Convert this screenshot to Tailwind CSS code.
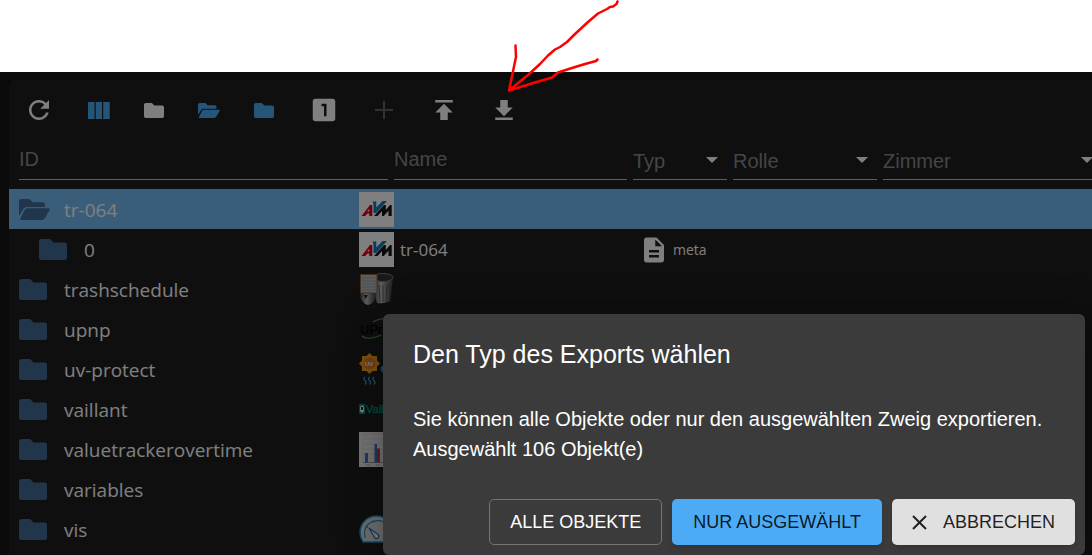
<!DOCTYPE html>
<html lang="de">
<head>
  <meta charset="UTF-8">
  <meta name="viewport" content="width=device-width, initial-scale=1.0">
  <title>Objekte</title>
  <script src="https://cdn.jsdelivr.net/npm/@tailwindcss/browser@4"></script>
</head>
<body class="h-screen flex flex-col overflow-hidden bg-white relative font-['Liberation_Sans',Arial,sans-serif]">
  <!-- Shared icons -->
  <svg class="hidden" aria-hidden="true">
    <symbol id="folder" viewBox="0 0 28 21"><path d="M2.500 0H11L14.500 3.500H25.500Q28 3.500 28 6V18.500Q28 21 25.500 21H2.500Q0 21 0 18.500V2.500Q0 0 2.500 0Z"/></symbol>
    <symbol id="folder-open" viewBox="0 0 31 21"><path d="M0 17V2.500Q0 0 2.500 0H10.500L13.500 3.200H23.500Q26 3.200 26 5.700V8H8Q5.500 8 4.200 10L0 17Z"/><path d="M8 9.300H29.700Q31.500 9.300 30.600 10.900L26 19Q24.900 21 22.700 21H2.200Q.6 21 1.400 19.500L5.700 11Q6.600 9.300 8 9.300Z"/></symbol>
    <symbol id="avm" viewBox="0 0 35 35">
      <path fill="#fff" d="M0 0H35V35H0Z"/>
      <path fill="#e2001a" d="M2.500 24L11 13H13.300V24H10.200V21.500H8.500L6.300 24ZM10.200 16.800L8.200 19.500H10.200Z"/>
      <path fill="#0a7fc4" d="M13.800 9.500H17.300V15.500L23.500 9H28L17 21H14.500V13Z"/>
      <path fill="#151515" d="M15 24L25 13H26.800V18L31 13H32.700V24H29.500V18.800L24.800 24H23V19L18.500 24Z"/>
    </symbol>
    <symbol id="caret" viewBox="0 0 12 6"><path d="M0 0H12L6 6Z"/></symbol>
  </svg>

  <div class="h-[72px] shrink-0"></div>

  <div class="relative flex-1 min-h-0 bg-[#141414] pl-[9px] pt-2 overflow-hidden">
    <main class="h-full bg-[#1f1f1f] rounded-tl-md overflow-hidden text-white">
      <!-- Toolbar -->
      <div class="flex items-center h-[60px]">
        <button aria-label="Aktualisieren" class="w-[60px] h-[60px] grid place-items-center">
          <svg class="size-[30px] fill-white" viewBox="0 0 24 24"><path d="M17.650 6.350C16.200 4.900 14.210 4 12 4c-4.420 0-7.990 3.580-7.990 8s3.570 8 7.990 8c3.730 0 6.840-2.550 7.730-6h-2.080c-.820 2.330-3.040 4-5.650 4-3.310 0-6-2.690-6-6s2.690-6 6-6c1.660 0 3.140.690 4.220 1.780L13 11h7V4l-2.350 2.350z"/></svg>
        </button>
        <div class="flex ml-[2px] mr-[3px]">
          <button aria-label="Spalten" class="w-[55px] h-[60px] grid place-items-center">
            <svg class="w-[22px] h-[17px] fill-[#4dabf5]" viewBox="0 0 22 17"><path d="M0 0H6.500V17H0ZM7.700 0H14V17H7.700ZM15.200 0H21.700V17H15.200Z"/></svg>
          </button>
          <button aria-label="Alle schließen" class="w-[55px] h-[60px] grid place-items-center">
            <svg class="w-5 h-[15px] fill-white"><use href="#folder"/></svg>
          </button>
          <button aria-label="Alle öffnen" class="w-[55px] h-[60px] grid place-items-center">
            <svg class="w-[22px] h-[15px] fill-[#4dabf5]"><use href="#folder-open"/></svg>
          </button>
          <button aria-label="Eine Ebene schließen" class="w-[55px] h-[60px] grid place-items-center">
            <svg class="w-5 h-[15px] fill-[#4dabf5]"><use href="#folder"/></svg>
          </button>
        </div>
        <button aria-label="Statusobjekte" class="w-[60px] h-[60px] grid place-items-center">
          <svg class="size-[30px] fill-white" viewBox="0 0 24 24"><path d="M19 3H5c-1.100 0-2 .9-2 2v14c0 1.100.9 2 2 2h14c1.100 0 2-.9 2-2V5c0-1.100-.9-2-2-2zM14 17h-2V9h-2V7h4z"/></svg>
        </button>
        <button aria-label="Hinzufügen" disabled class="w-[60px] h-[60px] grid place-items-center">
          <svg class="size-[30px] fill-[#626262]" viewBox="0 0 24 24"><path d="M19.200 12.800h-6.400v6.400h-1.600v-6.400H4.800v-1.600h6.400V4.800h1.600v6.400h6.400z"/></svg>
        </button>
        <button aria-label="Importieren" class="w-[60px] h-[60px] grid place-items-center">
          <svg class="size-[30px] fill-white" viewBox="0 0 24 24"><path d="M5 4v2h14V4H5zm0 10h4v6h6v-6h4l-7-7-7 7z"/></svg>
        </button>
        <button aria-label="Exportieren" class="w-[60px] h-[60px] grid place-items-center">
          <svg class="size-[30px] fill-white" viewBox="0 0 24 24"><path d="M19 10h-4V4H9v6H5l7 7 7-7zM5 18v2h14v-2H5z"/></svg>
        </button>
      </div>

      <!-- Object tree -->
      <table class="w-full min-w-[1099px] table-fixed text-left font-['Open_Sans','Segoe_UI',sans-serif] text-[19px]">
        <colgroup>
          <col class="w-[385px]"><col class="w-[239px]"><col class="w-[100px]"><col class="w-[150px]"><col>
        </colgroup>
        <thead class="font-['Liberation_Sans',Arial,sans-serif] text-xl">
          <tr>
            <th class="font-normal p-0 pb-[9px] pl-[10px] pr-[6px]"><input aria-label="ID" placeholder="ID" class="block w-full h-10 border-b border-[#bebebe] placeholder:text-[#8a8a8a] outline-none"></th>
            <th class="font-normal p-0 pb-[9px] pr-[6px]"><input aria-label="Name" placeholder="Name" class="block w-full h-10 border-b border-[#bebebe] placeholder:text-[#8a8a8a] outline-none"></th>
            <th class="font-normal p-0 pb-[9px] pr-[6px]">
              <div class="relative">
                <select aria-label="Typ" class="block appearance-none w-full h-10 pt-0.5 border-b border-[#bebebe] text-[#8a8a8a] outline-none"><option>Typ</option></select>
                <svg class="absolute right-[9px] top-[17px] w-3 h-[6px] fill-white pointer-events-none"><use href="#caret"/></svg>
              </div>
            </th>
            <th class="font-normal p-0 pb-[9px] pr-[6px]">
              <div class="relative">
                <select aria-label="Rolle" class="block appearance-none w-full h-10 pt-0.5 border-b border-[#bebebe] text-[#8a8a8a] outline-none"><option>Rolle</option></select>
                <svg class="absolute right-[9px] top-[17px] w-3 h-[6px] fill-white pointer-events-none"><use href="#caret"/></svg>
              </div>
            </th>
            <th class="font-normal p-0 pb-[9px] pr-[6px]">
              <div class="relative">
                <select aria-label="Zimmer" class="block appearance-none w-full h-10 pt-0.5 border-b border-[#bebebe] text-[#8a8a8a] outline-none"><option>Zimmer</option></select>
                <svg class="absolute right-[9px] top-[17px] w-3 h-[6px] fill-white pointer-events-none"><use href="#caret"/></svg>
              </div>
            </th>
          </tr>
        </thead>
        <tbody>
          <tr class="h-10 bg-[#74bcf4]">
            <td class="p-0 pl-[10px]">
              <div class="flex items-center">
                <svg class="w-[31px] h-[21px] mr-[14px] fill-[#446c96]"><use href="#folder-open"/></svg>
                <span class="flex-1 pt-0.5">tr-064</span>
                <svg class="size-[35px]"><use href="#avm"/></svg>
              </div>
            </td>
            <td></td><td></td><td></td><td></td>
          </tr>
          <tr class="h-10">
            <td class="p-0 pl-[30px]">
              <div class="flex items-center">
                <svg class="w-7 h-[21px] mr-[17px] fill-[#446c96]"><use href="#folder"/></svg>
                <span class="flex-1 pt-0.5">0</span>
                <svg class="size-[35px]"><use href="#avm"/></svg>
              </div>
            </td>
            <td class="p-0 pt-0.5 pl-[6px] text-[17px]">tr-064</td>
            <td class="p-0 pt-0.5 pl-[6px]">
              <div class="flex items-center gap-1 text-sm">
                <svg class="size-[30px] fill-white" viewBox="0 0 24 24"><path d="M14 2H6c-1.100 0-2 .9-2 2v16c0 1.100.9 2 2 2h12c1.100 0 2-.9 2-2V8l-6-6zm2 16H8v-2h8v2zm0-4H8v-2h8v2zm-3-5V3.500L18.500 9H13z"/></svg>
                <span>meta</span>
              </div>
            </td>
            <td></td><td></td>
          </tr>
          <tr class="h-10">
            <td class="p-0 pl-[10px]">
              <div class="flex items-center">
                <svg class="w-7 h-[21px] mr-[17px] fill-[#446c96]"><use href="#folder"/></svg>
                <span class="flex-1 pt-0.5">trashschedule</span>
                <svg class="size-[35px]" viewBox="0 0 35 35">
                  <defs><linearGradient id="can"><stop offset="0" stop-color="#444"/><stop offset=".4" stop-color="#bbb"/><stop offset=".7" stop-color="#777"/><stop offset="1" stop-color="#444"/></linearGradient></defs>
                  <path fill="url(#can)" d="M14 5L34 5L31 29Q25 32 18 31L15 20Z"/>
                  <path stroke="#444" stroke-width=".8" d="M20 13L21 30M24 13V30M28 13L27 30M31 12L30 28"/>
                  <ellipse cx="24" cy="5.500" rx="10" ry="4" fill="#333" stroke="#777"/>
                  <path fill="url(#can)" d="M1 21H17Q17 31 9 33Q1 31 1 21Z"/>
                  <path fill="#222" d="M5 23H9L6.500 27Z"/>
                  <path fill="#b4b8bc" stroke="#8c6239" d="M1.500 2.500H18V21H1.500Z"/>
                  <path stroke="#8a929c" stroke-width=".8" stroke-dasharray="1.500 1" d="M3 6H17M3 9H17M3 12H17M3 15H17M3 18H17"/>
                </svg>
              </div>
            </td>
            <td></td><td></td><td></td><td></td>
          </tr>
          <tr class="h-10">
            <td class="p-0 pl-[10px]">
              <div class="flex items-center">
                <svg class="w-7 h-[21px] mr-[17px] fill-[#446c96]"><use href="#folder"/></svg>
                <span class="flex-1 pt-0.5">upnp</span>
                <svg class="size-[35px]" viewBox="0 0 35 35">
                  <path fill="none" stroke="#4a9a4a" stroke-width="1.200" d="M14 10Q20 6 33 6M3 24Q8 29 22 23"/>
                  <text x="1" y="22" font-size="13" fill="#000" font-family="Liberation Sans, sans-serif">UPnP</text>
                </svg>
              </div>
            </td>
            <td></td><td></td><td></td><td></td>
          </tr>
          <tr class="h-10">
            <td class="p-0 pl-[10px]">
              <div class="flex items-center">
                <svg class="w-7 h-[21px] mr-[17px] fill-[#446c96]"><use href="#folder"/></svg>
                <span class="flex-1 pt-0.5">uv-protect</span>
                <svg class="size-[35px]" viewBox="0 0 35 35">
                  <path fill="#f0a818" d="M10.500 1L13.500 4L18 4L18 8.500L21 11.500L18 14.500V19H13.500L10.500 22L7.500 19H3V14.500L0 11.500L3 8.500V4H7.500Z"/>
                  <circle cx="10.500" cy="11.500" r="6" fill="#f07830"/>
                  <text x="6" y="14" font-size="6" font-weight="bold" fill="#fff" font-family="Liberation Sans, sans-serif">UV</text>
                  <path fill="none" stroke="#3fa0c8" stroke-width="1.300" d="M6 25q-2 1.500 0 3.500t0 4M10.500 25q-2 1.500 0 3.500t0 4M15 25q-2 1.500 0 3.500t0 4"/>
                  <circle cx="25" cy="17" r="3.500" fill="#3f88c8"/>
                </svg>
              </div>
            </td>
            <td></td><td></td><td></td><td></td>
          </tr>
          <tr class="h-10">
            <td class="p-0 pl-[10px]">
              <div class="flex items-center">
                <svg class="w-7 h-[21px] mr-[17px] fill-[#446c96]"><use href="#folder"/></svg>
                <span class="flex-1 pt-0.5">vaillant</span>
                <svg class="size-[35px] overflow-visible" viewBox="0 0 35 35">
                  <rect y="12" width="6" height="10" rx="1" fill="#00917e"/>
                  <ellipse cx="3" cy="17" rx="2" ry="3.500" fill="#fff"/><path fill="#222" d="M2 15h2v3H2z"/>
                  <text x="7" y="21" font-size="11" fill="#00917e" stroke="#00917e" stroke-width=".4" font-family="Liberation Sans, sans-serif">Vaillant</text>
                </svg>
              </div>
            </td>
            <td></td><td></td><td></td><td></td>
          </tr>
          <tr class="h-10">
            <td class="p-0 pl-[10px]">
              <div class="flex items-center">
                <svg class="w-7 h-[21px] mr-[17px] fill-[#446c96]"><use href="#folder"/></svg>
                <span class="flex-1 pt-0.5">valuetrackerovertime</span>
                <svg class="size-[35px]" viewBox="0 0 35 35">
                  <path fill="#e8e8e8" d="M0 0H35V35H0Z"/>
                  <path stroke="#ccc" stroke-width=".6" d="M4 2V31M4 2H35M4 7H35M4 12H35M4 17H35M4 22H35M4 26H35"/>
                  <path stroke="#999" d="M4 30.500H35"/><path stroke="#aaa" d="M7 33H11M17 33H21"/>
                  <path fill="#4472c4" d="M6 21H9V30.500H6ZM15.500 12H18V30.500H15.500Z"/><path fill="#c0404a" d="M18 16.500H21V30.500H18Z"/>
                </svg>
              </div>
            </td>
            <td></td><td></td><td></td><td></td>
          </tr>
          <tr class="h-10">
            <td class="p-0 pl-[10px]">
              <div class="flex items-center">
                <svg class="w-7 h-[21px] mr-[17px] fill-[#446c96]"><use href="#folder"/></svg>
                <span class="flex-1 pt-0.5">variables</span>
              </div>
            </td>
            <td></td><td></td><td></td><td></td>
          </tr>
          <tr class="h-10">
            <td class="p-0 pl-[10px]">
              <div class="flex items-center">
                <svg class="w-7 h-[21px] mr-[17px] fill-[#446c96]"><use href="#folder"/></svg>
                <span class="flex-1 pt-0.5">vis</span>
                <svg class="size-[35px]" viewBox="0 0 35 35">
                  <path fill="#ddd" stroke="#2a8fd0" stroke-width="1.500" d="M4 30Q1 25 1 20.500A16.500 16.500 0 0 1 34 20.500Q34 25 31 30Z"/>
                  <path fill="none" stroke="#2a8fd0" stroke-width="1.200" d="M6 26Q4 16 10 11.500Q17 6.500 25 10M7 14l2 1.500M14 8.500l1 2"/>
                  <path fill="#fff" stroke="#2a7ab8" stroke-width="1.200" d="M10 16L19 22.500A2.300 2.300 0 0 1 16 26Z"/>
                </svg>
              </div>
            </td>
            <td></td><td></td><td></td><td></td>
          </tr>
        </tbody>
      </table>
    </main>

    <!-- Export dialog -->
    <div class="absolute inset-0 flex items-end justify-end pr-[7px] bg-black/50">
      <div role="dialog" aria-labelledby="export-title" class="w-[702px] max-w-full rounded-md bg-[#3b3b3b] text-white shadow-[0_11px_15px_-7px_rgba(0,0,0,0.2),0_24px_38px_3px_rgba(0,0,0,0.14),0_9px_46px_8px_rgba(0,0,0,0.12)]">
        <h2 id="export-title" class="px-[30px] py-5 text-[25px] leading-[40px]">Den Typ des Exports wählen</h2>
        <div class="px-[30px] pt-[10px] pb-[25px] text-xl leading-[30px]">
          <p>Sie können alle Objekte oder nur den ausgewählten Zweig exportieren.</p>
          <p>Ausgewählt 106 Objekt(e)</p>
        </div>
        <div class="flex justify-end gap-[10px] p-[10px] text-lg">
          <button class="h-[46px] px-5 rounded-[5px] border border-[#757575]">ALLE OBJEKTE</button>
          <button class="h-[46px] px-[21px] rounded-[5px] bg-[#4dabf5] text-black/87 shadow-md">NUR AUSGEWÄHLT</button>
          <button class="h-[46px] px-5 rounded-[5px] bg-[#e0e0e0] text-black/87 shadow-md flex items-center gap-4">
            <svg class="size-[15px] stroke-[#212121] stroke-2" viewBox="0 0 15 15"><path d="M1 1L14 14M14 1L1 14"/></svg>
            ABBRECHEN
          </button>
        </div>
      </div>
    </div>
  </div>

  <!-- Hand-drawn arrow -->
  <svg class="absolute left-[500px] top-0 w-[130px] h-[100px] fill-none stroke-[#ff0000] stroke-[2.5]" viewBox="0 0 130 100" stroke-linecap="round" stroke-linejoin="round">
    <path d="M117.500 1.500L116.500 4L113 6.500L110 7L107 9L98 13.500L88 22L75 34L67 42L60 47L55 49.500L48 55.500L40 64L28 75L9 90.500L16 57L15.500 45.500M9 90.500L30 84L52 77.500L58 72.500L72 68L85 64L96 61L97.500 59.500"/>
  </svg>
</body>
</html>
